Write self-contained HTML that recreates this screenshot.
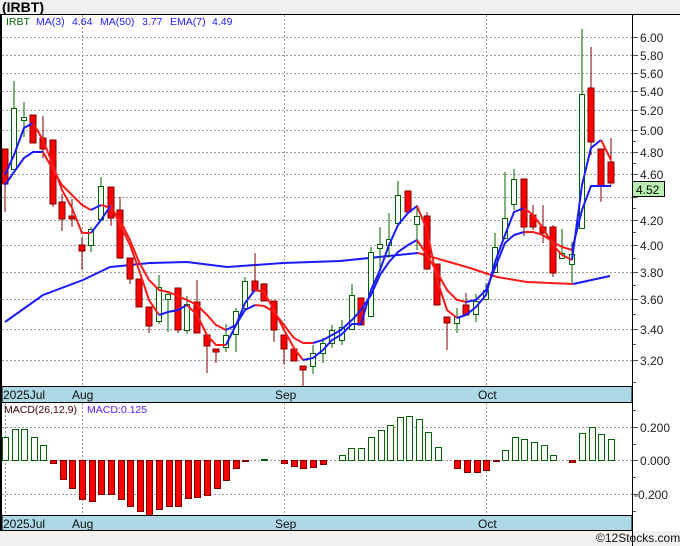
<!DOCTYPE html>
<html><head><meta charset="utf-8"><style>
body{margin:0;width:680px;height:546px;overflow:hidden;background:#fff;font-family:"Liberation Sans",sans-serif}
svg{display:block}
</style></head><body>
<svg width="680" height="546" viewBox="0 0 680 546" xmlns="http://www.w3.org/2000/svg" font-family="Liberation Sans, sans-serif">
<rect x="0" y="0" width="680" height="14" fill="#f0f0f0"/>
<rect x="0" y="531" width="680" height="15" fill="#f0f0f0"/>
<text x="2" y="12" font-size="14" font-weight="bold" fill="#000">(IRBT)</text>
<g stroke="#999" stroke-dasharray="2,2" stroke-width="1">
<line x1="2" x2="632" y1="37.5" y2="37.5"/><line x1="2" x2="632" y1="55.5" y2="55.5"/><line x1="2" x2="632" y1="73.5" y2="73.5"/><line x1="2" x2="632" y1="91.5" y2="91.5"/><line x1="2" x2="632" y1="110.5" y2="110.5"/><line x1="2" x2="632" y1="130.5" y2="130.5"/><line x1="2" x2="632" y1="152.5" y2="152.5"/><line x1="2" x2="632" y1="174.5" y2="174.5"/><line x1="2" x2="632" y1="197.5" y2="197.5"/><line x1="2" x2="632" y1="220.5" y2="220.5"/><line x1="2" x2="632" y1="245.5" y2="245.5"/><line x1="2" x2="632" y1="272.5" y2="272.5"/><line x1="2" x2="632" y1="299.5" y2="299.5"/><line x1="2" x2="632" y1="329.5" y2="329.5"/><line x1="2" x2="632" y1="360.5" y2="360.5"/>
<line x1="82.5" x2="82.5" y1="15" y2="386"/><line x1="284.5" x2="284.5" y1="15" y2="386"/><line x1="486.5" x2="486.5" y1="15" y2="386"/>
<line x1="5.5" x2="5.5" y1="403" y2="515"/><line x1="82.5" x2="82.5" y1="403" y2="515"/><line x1="284.5" x2="284.5" y1="403" y2="515"/><line x1="486.5" x2="486.5" y1="403" y2="515"/>
<line x1="2" x2="632" y1="427.5" y2="427.5"/><line x1="2" x2="632" y1="460.5" y2="460.5"/><line x1="2" x2="632" y1="494.5" y2="494.5"/>
</g>
<g stroke="#555" stroke-width="1">
<line x1="632" x2="638" y1="37.5" y2="37.5"/><line x1="632" x2="638" y1="55.5" y2="55.5"/><line x1="632" x2="638" y1="73.5" y2="73.5"/><line x1="632" x2="638" y1="91.5" y2="91.5"/><line x1="632" x2="638" y1="110.5" y2="110.5"/><line x1="632" x2="638" y1="130.5" y2="130.5"/><line x1="632" x2="638" y1="152.5" y2="152.5"/><line x1="632" x2="638" y1="174.5" y2="174.5"/><line x1="632" x2="638" y1="197.5" y2="197.5"/><line x1="632" x2="638" y1="220.5" y2="220.5"/><line x1="632" x2="638" y1="245.5" y2="245.5"/><line x1="632" x2="638" y1="272.5" y2="272.5"/><line x1="632" x2="638" y1="299.5" y2="299.5"/><line x1="632" x2="638" y1="329.5" y2="329.5"/><line x1="632" x2="638" y1="360.5" y2="360.5"/>
<line x1="632" x2="636" y1="141.5" y2="141.5"/><line x1="632" x2="636" y1="163.5" y2="163.5"/><line x1="632" x2="636" y1="208.5" y2="208.5"/><line x1="632" x2="636" y1="232.5" y2="232.5"/><line x1="632" x2="636" y1="258.5" y2="258.5"/><line x1="632" x2="636" y1="285.5" y2="285.5"/><line x1="632" x2="636" y1="314.5" y2="314.5"/><line x1="632" x2="636" y1="344.5" y2="344.5"/><line x1="632" x2="636" y1="382.5" y2="382.5"/>
<line x1="632" x2="638" y1="427.5" y2="427.5"/><line x1="632" x2="638" y1="460.5" y2="460.5"/><line x1="632" x2="638" y1="494.5" y2="494.5"/>
<line x1="632" x2="636" y1="410.5" y2="410.5"/><line x1="632" x2="636" y1="444.5" y2="444.5"/><line x1="632" x2="636" y1="477.5" y2="477.5"/><line x1="632" x2="636" y1="511.5" y2="511.5"/>
</g>
<g font-size="12" fill="#222">
<text x="640" y="42">6.00</text><text x="640" y="60">5.80</text><text x="640" y="78">5.60</text><text x="640" y="96">5.40</text><text x="640" y="115">5.20</text><text x="640" y="135">5.00</text><text x="640" y="157">4.80</text><text x="640" y="179">4.60</text><text x="640" y="225">4.20</text><text x="640" y="250">4.00</text><text x="640" y="277">3.80</text><text x="640" y="304">3.60</text><text x="640" y="334">3.40</text><text x="640" y="365">3.20</text>
<text x="640" y="432">0.200</text><text x="640" y="465">0.000</text><text x="634" y="499">-0.200</text>
</g>
<rect x="632.5" y="181.5" width="32" height="15" fill="#b8f0b0" stroke="#000"/>
<text x="636" y="194" font-size="12" fill="#000">4.52</text>
<polyline fill="none" stroke="#1a1aff" stroke-width="2" points="5,322 43,295 83,280 110,267 150,263 187,262 227,267 283,263 340,261 418,253"/>
<polyline fill="none" stroke="#ff1a1a" stroke-width="2" points="418,253 470,268 497,277 527,282 573,284"/>
<polyline fill="none" stroke="#1a1aff" stroke-width="2" points="573,284 610,276"/>
<g stroke="#800000" fill="#f00">
<line x1="5" x2="5" y1="149" y2="212"/><rect x="2" y="149" width="6" height="35"/>
<line x1="33" x2="33" y1="115" y2="143"/><rect x="30" y="115" width="6" height="28"/>
<line x1="43" x2="43" y1="116" y2="158"/><rect x="40" y="138" width="6" height="11"/>
<line x1="53" x2="53" y1="140" y2="207"/><rect x="50" y="140" width="6" height="64"/>
<line x1="62" x2="62" y1="194" y2="231"/><rect x="59" y="202" width="6" height="17"/>
<line x1="72" x2="72" y1="199" y2="227"/><rect x="69" y="216" width="6" height="3"/>
<line x1="82" x2="82" y1="237" y2="270"/><rect x="79" y="245" width="6" height="6"/>
<line x1="111" x2="111" y1="187" y2="226"/><rect x="108" y="187" width="6" height="31"/>
<line x1="120" x2="120" y1="197" y2="259"/><rect x="117" y="210" width="6" height="48"/>
<line x1="130" x2="130" y1="258" y2="284"/><rect x="127" y="258" width="6" height="21"/>
<line x1="139" x2="139" y1="279" y2="307"/><rect x="136" y="279" width="6" height="28"/>
<line x1="149" x2="149" y1="307" y2="333"/><rect x="146" y="307" width="6" height="19"/>
<line x1="178" x2="178" y1="288" y2="333"/><rect x="175" y="288" width="6" height="42"/>
<line x1="197" x2="197" y1="280" y2="333"/><rect x="194" y="302" width="6" height="31"/>
<line x1="207" x2="207" y1="335" y2="373"/><rect x="204" y="335" width="6" height="11"/>
<line x1="216" x2="216" y1="349" y2="363"/><rect x="213" y="349" width="6" height="3"/>
<line x1="255" x2="255" y1="253" y2="291"/><rect x="252" y="281" width="6" height="10"/>
<line x1="264" x2="264" y1="283" y2="301"/><rect x="261" y="284" width="6" height="17"/>
<line x1="274" x2="274" y1="301" y2="342"/><rect x="271" y="301" width="6" height="29"/>
<line x1="284" x2="284" y1="335" y2="364"/><rect x="281" y="335" width="6" height="14"/>
<line x1="294" x2="294" y1="349" y2="361"/><rect x="291" y="349" width="6" height="12"/>
<line x1="303" x2="303" y1="366" y2="388"/><rect x="300" y="366" width="6" height="4"/>
<line x1="361" x2="361" y1="298" y2="325"/><rect x="358" y="298" width="6" height="27"/>
<line x1="408" x2="408" y1="190" y2="212"/><rect x="405" y="191" width="6" height="21"/>
<line x1="427" x2="427" y1="212" y2="270"/><rect x="424" y="216" width="6" height="53"/>
<line x1="437" x2="437" y1="264" y2="305"/><rect x="434" y="264" width="6" height="41"/>
<line x1="447" x2="447" y1="317" y2="350"/><rect x="444" y="317" width="6" height="6"/>
<line x1="466" x2="466" y1="293" y2="315"/><rect x="463" y="305" width="6" height="10"/>
<line x1="524" x2="524" y1="179" y2="236"/><rect x="521" y="179" width="6" height="48"/>
<line x1="533" x2="533" y1="205" y2="230"/><rect x="530" y="215" width="6" height="12"/>
<line x1="543" x2="543" y1="205" y2="243"/><rect x="540" y="227" width="6" height="6"/>
<line x1="553" x2="553" y1="225" y2="277"/><rect x="550" y="227" width="6" height="46"/>
<line x1="591" x2="591" y1="47" y2="155"/><rect x="588" y="88" width="6" height="54"/>
<line x1="601" x2="601" y1="149" y2="202"/><rect x="598" y="149" width="6" height="37"/>
<line x1="611" x2="611" y1="138" y2="185"/><rect x="608" y="162" width="6" height="21"/>
</g>
<g stroke="#006400" fill="#fff">
<line x1="14" x2="14" y1="81" y2="169"/><rect x="11.5" y="108.5" width="5" height="61"/>
<line x1="24" x2="24" y1="102" y2="137"/><rect x="21.5" y="117.5" width="5" height="3"/>
<line x1="91" x2="91" y1="227" y2="252"/><rect x="88.5" y="229.5" width="5" height="16"/>
<line x1="101" x2="101" y1="177" y2="219"/><rect x="98.5" y="186.5" width="5" height="33"/>
<line x1="159" x2="159" y1="275" y2="324"/><rect x="156.5" y="287.5" width="5" height="34"/>
<line x1="168" x2="168" y1="291" y2="332"/><rect x="165.5" y="294.5" width="5" height="5"/>
<line x1="187" x2="187" y1="296" y2="334"/><rect x="184.5" y="304.5" width="5" height="26"/>
<line x1="226" x2="226" y1="324" y2="352"/><rect x="223.5" y="335.5" width="5" height="12"/>
<line x1="236" x2="236" y1="308" y2="352"/><rect x="233.5" y="311.5" width="5" height="23"/>
<line x1="245" x2="245" y1="277" y2="308"/><rect x="242.5" y="281.5" width="5" height="27"/>
<line x1="313" x2="313" y1="345" y2="374"/><rect x="310.5" y="353.5" width="5" height="13"/>
<line x1="323" x2="323" y1="338" y2="363"/><rect x="320.5" y="343.5" width="5" height="10"/>
<line x1="332" x2="332" y1="325" y2="348"/><rect x="329.5" y="330.5" width="5" height="13"/>
<line x1="342" x2="342" y1="320" y2="345"/><rect x="339.5" y="327.5" width="5" height="13"/>
<line x1="352" x2="352" y1="284" y2="329"/><rect x="349.5" y="295.5" width="5" height="34"/>
<line x1="371" x2="371" y1="247" y2="316"/><rect x="368.5" y="252.5" width="5" height="64"/>
<line x1="380" x2="380" y1="227" y2="270"/><rect x="377.5" y="244.5" width="5" height="4"/>
<line x1="389" x2="389" y1="213" y2="258"/><rect x="386.5" y="239.5" width="5" height="6"/>
<line x1="398" x2="398" y1="181" y2="223"/><rect x="395.5" y="195.5" width="5" height="28"/>
<line x1="417" x2="417" y1="205" y2="250"/><rect x="414.5" y="216.5" width="5" height="8"/>
<line x1="457" x2="457" y1="308" y2="333"/><rect x="454.5" y="317.5" width="5" height="6"/>
<line x1="476" x2="476" y1="294" y2="322"/><rect x="473.5" y="301.5" width="5" height="13"/>
<line x1="486" x2="486" y1="283" y2="299"/><rect x="483.5" y="290.5" width="5" height="9"/>
<line x1="495" x2="495" y1="233" y2="272"/><rect x="492.5" y="247.5" width="5" height="25"/>
<line x1="505" x2="505" y1="172" y2="238"/><rect x="502.5" y="218.5" width="5" height="20"/>
<line x1="514" x2="514" y1="169" y2="210"/><rect x="511.5" y="179.5" width="5" height="25"/>
<line x1="562" x2="562" y1="229" y2="258"/><rect x="559.5" y="253.5" width="5" height="5"/>
<line x1="572" x2="572" y1="242" y2="283"/><rect x="569.5" y="254.5" width="5" height="10"/>
<line x1="582" x2="582" y1="29" y2="228"/><rect x="579.5" y="94.5" width="5" height="134"/>
</g>
<g fill="none" stroke-width="2">
<polyline stroke="#1a1aff" points="5,185 14,172 24,158 33,152 43,152"/>
<polyline stroke="#ff1a1a" points="43,152 53,170 62,185 72,195 82,205 91,210"/>
<polyline stroke="#1a1aff" points="91,210 101,205"/>
<polyline stroke="#ff1a1a" points="101,205 111,208 120,220 130,240 139,262 149,280 159,290 168,292 178,296 187,300 197,305 207,315 216,325 226,330"/>
<polyline stroke="#1a1aff" points="226,330 236,325 245,310 255,305"/>
<polyline stroke="#ff1a1a" points="255,305 264,306 274,312 284,325 294,338 303,343 313,343"/>
<polyline stroke="#1a1aff" points="313,343 323,340 332,335 341,330 352,320 361,310 371,295 380,275 389,262 398,252 408,245 417,240"/>
<polyline stroke="#ff1a1a" points="417,240 427,255 437,272 447,290 457,300 466,302"/>
<polyline stroke="#1a1aff" points="466,302 476,300 486,290 495,268 505,243 514,235 524,232"/>
<polyline stroke="#ff1a1a" points="524,232 533,232 543,235 553,242 562,247 572,250"/>
<polyline stroke="#1a1aff" points="572,250 582,210 591,186 601,186 611,186"/>
<polyline stroke="#1a1aff" points="5,175 14,155 24,128 33,123"/>
<polyline stroke="#ff1a1a" points="33,123 43,140 53,165 62,190 72,208 82,233 91,233"/>
<polyline stroke="#1a1aff" points="91,233 101,220 111,205"/>
<polyline stroke="#ff1a1a" points="111,205 120,225 130,245 139,270 149,300 159,315"/>
<polyline stroke="#1a1aff" points="159,315 168,312 178,310 187,305"/>
<polyline stroke="#ff1a1a" points="187,305 197,315 207,335 216,345 226,345"/>
<polyline stroke="#1a1aff" points="226,345 236,325 245,303 255,290"/>
<polyline stroke="#ff1a1a" points="255,290 264,292 274,310 284,330 294,348 303,360"/>
<polyline stroke="#1a1aff" points="303,360 313,358 323,350 332,340 341,335 352,324 361,324 371,290 380,270 389,245 398,225 408,213 417,206"/>
<polyline stroke="#ff1a1a" points="417,206 427,230 437,280 447,310 457,318"/>
<polyline stroke="#1a1aff" points="457,318 466,315 476,307 486,295 495,262 505,235 514,212 524,208"/>
<polyline stroke="#ff1a1a" points="524,208 533,215 543,228 553,245 562,255 572,260"/>
<polyline stroke="#1a1aff" points="572,260 582,185 591,148 601,140"/>
<polyline stroke="#ff1a1a" points="601,140 611,160"/>
</g>
<g fill="#fff" stroke="#006400">
<rect x="2.5" y="437.5" width="6" height="23"/><rect x="12.5" y="429.5" width="6" height="31"/><rect x="21.5" y="429.5" width="6" height="31"/><rect x="31.5" y="437.5" width="6" height="23"/><rect x="40.5" y="445.5" width="6" height="15"/>
<rect x="261.5" y="459.5" width="6" height="1"/><rect x="339.5" y="455.5" width="6" height="5"/><rect x="348.5" y="448.5" width="6" height="12"/><rect x="358.5" y="448.5" width="6" height="12"/><rect x="368.5" y="437.5" width="6" height="23"/><rect x="378.5" y="430.5" width="6" height="30"/><rect x="387.5" y="425.5" width="6" height="35"/><rect x="397.5" y="417.5" width="6" height="43"/><rect x="406.5" y="416.5" width="6" height="44"/><rect x="416.5" y="419.5" width="6" height="41"/><rect x="425.5" y="432.5" width="6" height="28"/><rect x="435.5" y="447.5" width="6" height="13"/>
<rect x="502.5" y="450.5" width="6" height="10"/><rect x="512.5" y="437.5" width="6" height="23"/><rect x="521.5" y="439.5" width="6" height="21"/><rect x="531.5" y="442.5" width="6" height="18"/><rect x="541.5" y="445.5" width="6" height="15"/><rect x="550.5" y="455.5" width="6" height="5"/><rect x="579.5" y="433.5" width="6" height="27"/><rect x="589.5" y="427.5" width="6" height="33"/><rect x="598.5" y="434.5" width="6" height="26"/><rect x="608.5" y="439.5" width="6" height="21"/>
</g>
<g fill="#f00" stroke="#800000">
<rect x="50.5" y="460.5" width="6" height="3"/><rect x="60.5" y="460.5" width="6" height="19"/><rect x="69.5" y="460.5" width="6" height="28"/><rect x="79.5" y="460.5" width="6" height="39"/><rect x="89.5" y="460.5" width="6" height="41"/><rect x="98.5" y="460.5" width="6" height="34"/><rect x="108.5" y="460.5" width="6" height="34"/><rect x="118.5" y="460.5" width="6" height="39"/><rect x="127.5" y="460.5" width="6" height="46"/><rect x="137.5" y="460.5" width="6" height="51"/><rect x="146.5" y="460.5" width="6" height="55"/><rect x="156.5" y="460.5" width="6" height="49"/><rect x="166.5" y="460.5" width="6" height="46"/><rect x="175.5" y="460.5" width="6" height="46"/><rect x="185.5" y="460.5" width="6" height="38"/><rect x="194.5" y="460.5" width="6" height="37"/><rect x="204.5" y="460.5" width="6" height="35"/><rect x="214.5" y="460.5" width="6" height="28"/><rect x="223.5" y="460.5" width="6" height="20"/><rect x="233.5" y="460.5" width="6" height="8"/><rect x="242.5" y="460.5" width="6" height="1"/>
<rect x="281.5" y="460.5" width="6" height="3"/><rect x="291.5" y="460.5" width="6" height="6"/><rect x="300.5" y="460.5" width="6" height="8"/><rect x="310.5" y="460.5" width="6" height="7"/><rect x="320.5" y="460.5" width="6" height="4"/>
<rect x="454.5" y="460.5" width="6" height="8"/><rect x="464.5" y="460.5" width="6" height="12"/><rect x="474.5" y="460.5" width="6" height="12"/><rect x="483.5" y="460.5" width="6" height="10"/><rect x="493.5" y="460.5" width="6" height="1"/><rect x="569.5" y="460.5" width="6" height="2"/>
</g>
<rect x="2" y="386.5" width="630" height="16" fill="#add8e6" stroke="#000"/>
<rect x="2" y="515.5" width="630" height="15" fill="#add8e6" stroke="#000"/>
<g font-size="12" fill="#111">
<text x="3" y="399">2025Jul</text><text x="72" y="399">Aug</text><text x="275" y="399">Sep</text><text x="478" y="399">Oct</text>
<text x="3" y="528">2025Jul</text><text x="72" y="528">Aug</text><text x="275" y="528">Sep</text><text x="478" y="528">Oct</text>
</g>
<line x1="0" x2="680" y1="14.5" y2="14.5" stroke="#000"/>
<line x1="1" x2="1" y1="14" y2="531" stroke="#000" stroke-width="2"/>
<line x1="632.5" x2="632.5" y1="14" y2="546" stroke="#000"/>
<line x1="0" x2="632" y1="530.5" y2="530.5" stroke="#000"/>
<g font-size="10.5">
<text x="6" y="25" fill="#006400">IRBT</text>
<text x="36" y="25" fill="#2020ff">MA(3)</text><text x="72" y="25" fill="#2020ff">4.64</text>
<text x="100" y="25" fill="#2020ff">MA(50)</text><text x="142" y="25" fill="#2020ff">3.77</text>
<text x="170" y="25" fill="#2020ff">EMA(7)</text><text x="212" y="25" fill="#2020ff">4.49</text>
</g>
<text x="4" y="413" font-size="10.5" fill="#400000">MACD(26,12,9)</text>
<text x="87" y="413" font-size="10.5" fill="#5a1aff">MACD:0.125</text>
<text x="596" y="542" font-size="12" fill="#111">©12Stocks.com</text>
</svg>
</body></html>
